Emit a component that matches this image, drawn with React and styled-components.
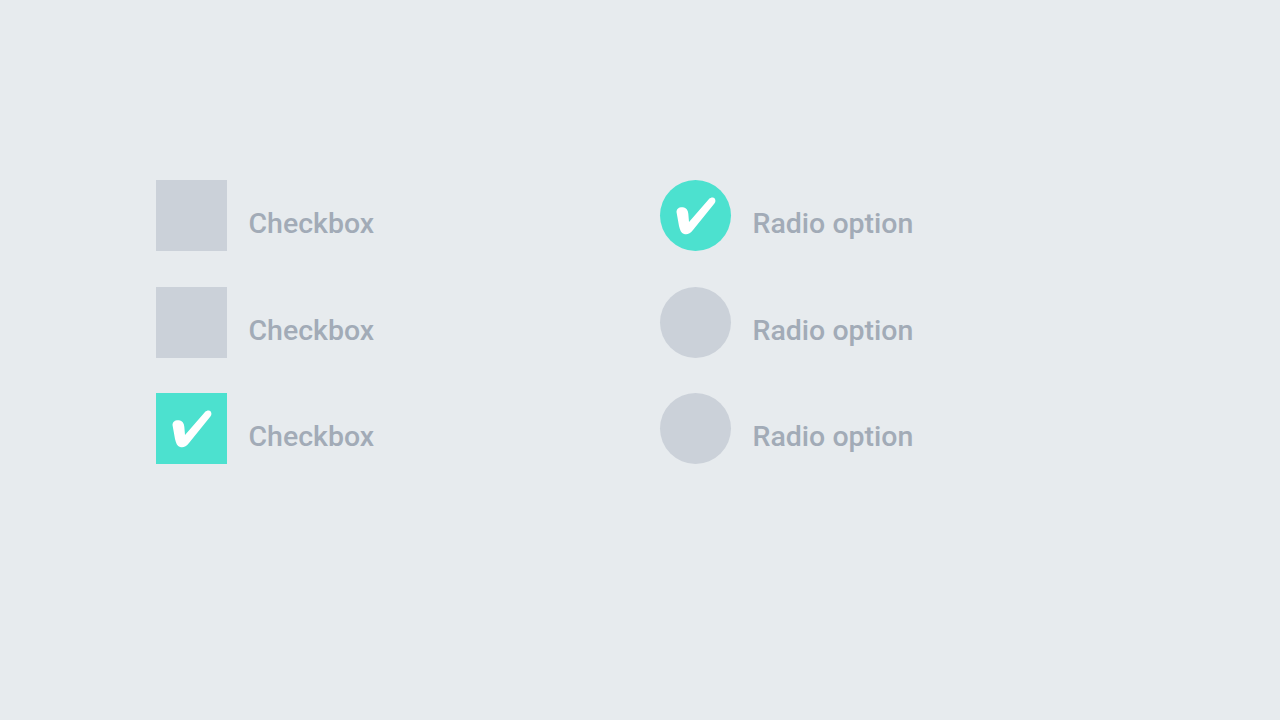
import React from "react";
import styled, { createGlobalStyle } from "styled-components";

const GlobalStyle = createGlobalStyle`
  html, body {
    margin: 0;
    padding: 0;
    background: #e7ebee;
    font-family: Roboto, "Liberation Sans", sans-serif;
  }
`;

export default function App() {
  const checks = [false, false, true];
  const radios = [true, false, false];

  return (
    <Page>
      <GlobalStyle />
      <Columns>
        <Column>
          {checks.map((on, i) => (
            <Option key={i}>
              <Control $on={on}>{on && <Tick />}</Control>
              <Label>Checkbox</Label>
            </Option>
          ))}
        </Column>
        <Column>
          {radios.map((on, i) => (
            <Option key={i}>
              <Control $on={on} $round>
                {on && <Tick />}
              </Control>
              <Label>Radio option</Label>
            </Option>
          ))}
        </Column>
      </Columns>
    </Page>
  );
}

function Tick() {
  return (
    <svg width="71" height="71" viewBox="0 0 71 71">
      <path
        d="M16.5 32 C16.5 27.5 21 26.5 24 27.5 C27.5 28.5 28.5 32 28.5 36 L29 42 L49 19 C51 17 54 17 55 19 C56 21 55 23 54 24 L33 50 C30 54 27 55 24 54 C21 53 20 50 19 46 Z"
        fill="#ffffff"
      />
    </svg>
  );
}

const Page = styled.div`
  width: 1280px;
  height: 720px;
  padding: 180px 0 0 156px;
  box-sizing: border-box;
`;

const Columns = styled.div`
  display: grid;
  grid-template-columns: 504px auto;
`;

const Column = styled.div`
  display: flex;
  flex-direction: column;
  gap: 35.5px;
`;

const Option = styled.div`
  display: flex;
  align-items: center;
  gap: 21.5px;
  height: 71px;
`;

const Control = styled.div`
  width: 71px;
  height: 71px;
  flex-shrink: 0;
  background: ${(p) => (p.$on ? "#4ce1cf" : "#cbd1d9")};
  border-radius: ${(p) => (p.$round ? "50%" : "0")};
  svg {
    display: block;
  }
`;

const Label = styled.span`
  font-size: 28.5px;
  font-weight: 500;
  color: #a2abb7;
  padding-top: 16px;
`;
